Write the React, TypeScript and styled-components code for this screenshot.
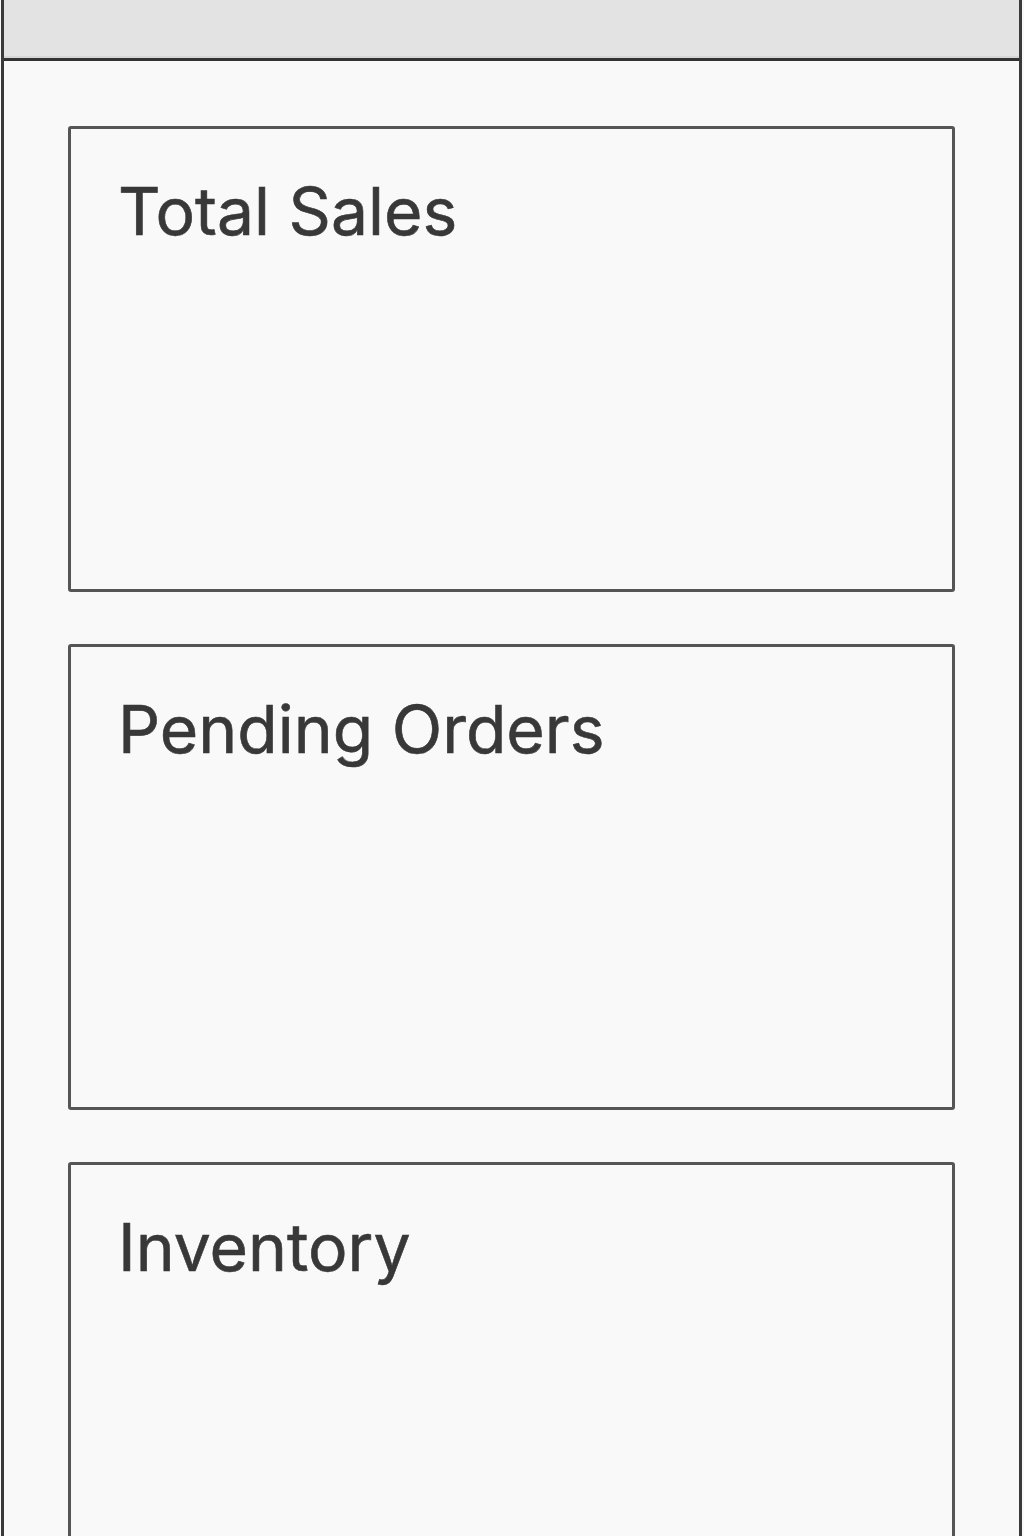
import React from 'react';
import styled, { createGlobalStyle } from 'styled-components';

const cards = ['Total Sales', 'Pending Orders', 'Inventory'];

const App: React.FC = () => {
  return (
    <>
      <GlobalStyle />
      <Frame>
        <TopBar />
        <Content>
          {cards.map((title) => (
            <Card key={title}>
              <CardTitle>{title}</CardTitle>
            </Card>
          ))}
        </Content>
      </Frame>
    </>
  );
};

export default App;

const GlobalStyle = createGlobalStyle({
  'html, body': {
    margin: 0,
    padding: 0,
    background: '#f9f9f9',
  },
  body: {
    fontFamily: 'Inter, "Noto Sans", sans-serif',
    overflow: 'hidden',
  },
});

const Frame = styled('div')({
  margin: '0 2px 0 1px',
  minHeight: '1536px',
  borderLeft: '3px solid #3a3a3a',
  borderRight: '3px solid #3a3a3a',
  background: '#f9f9f9',
  boxSizing: 'border-box',
});

const TopBar = styled('div')({
  height: '56px',
  background: '#e3e3e3',
  borderBottom: '2px solid #d6d6d6',
  boxShadow: '0 3px 0 #333',
  marginBottom: '3px',
});

const Content = styled('div')({
  display: 'flex',
  flexDirection: 'column',
  gap: '52px',
  padding: '65px 64px 0 64px',
});

const Card = styled('div')({
  height: '466px',
  border: '3px solid #555',
  borderRadius: '3px',
  background: '#f9f9f9',
  boxSizing: 'border-box',
  padding: '42px 47px',
  flexShrink: 0,
});

const CardTitle = styled('h2')({
  margin: 0,
  fontSize: '66px',
  fontWeight: 400,
  color: '#383838',
  WebkitTextStroke: '0.6px #383838',
});
